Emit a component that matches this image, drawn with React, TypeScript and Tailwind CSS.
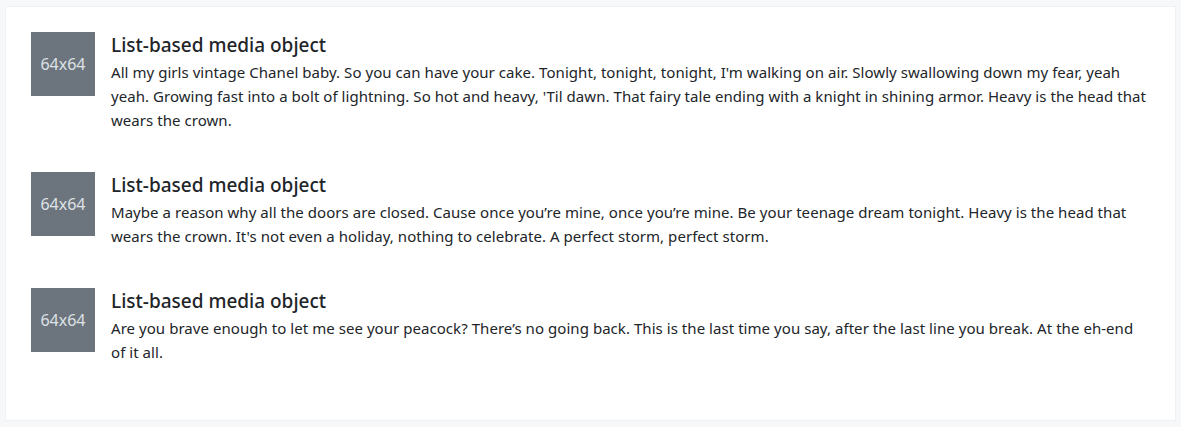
import React from "react";

const items: { lines: string[] }[] = [
  {
    lines: [
      "All my girls vintage Chanel baby. So you can have your cake. Tonight, tonight, tonight, I'm walking on air. Slowly swallowing down my fear, yeah",
      "yeah. Growing fast into a bolt of lightning. So hot and heavy, 'Til dawn. That fairy tale ending with a knight in shining armor. Heavy is the head that",
      "wears the crown.",
    ],
  },
  {
    lines: [
      "Maybe a reason why all the doors are closed. Cause once you\u2019re mine, once you\u2019re mine. Be your teenage dream tonight. Heavy is the head that",
      "wears the crown. It's not even a holiday, nothing to celebrate. A perfect storm, perfect storm.",
    ],
  },
  {
    lines: [
      "Are you brave enough to let me see your peacock? There\u2019s no going back. This is the last time you say, after the last line you break. At the eh-end",
      "of it all.",
    ],
  },
];

export default function App() {
  return (
    <div
      className="w-[1181px] h-[427px] bg-[#f7f8f9] pt-[6px] pl-[5px] pr-[5px] overflow-hidden"
      style={{ fontFamily: '"Noto Sans", "Open Sans", sans-serif' }}
    >
      <div className="h-[415px] bg-white border border-[#eff1f3] pt-[25px] pl-[25px]">
        <ul className="flex flex-col gap-10">
          {items.map((it, i) => (
            <li key={i} className="flex items-start gap-4">
              <div className="w-16 h-16 shrink-0 bg-[#6c757d] flex items-center justify-center text-[#dee2e6] text-[16px]">
                64x64
              </div>
              <div className="flex flex-col text-[#212529]">
                <h5 className="text-[19px] font-medium leading-6 mt-[1px] mb-[3px]">List-based media object</h5>
                <p className="text-[15px] leading-6 tracking-[0.05px]">
                  {it.lines.map((l, j) => (
                    <span key={j} className="block whitespace-nowrap">
                      {l}
                    </span>
                  ))}
                </p>
              </div>
            </li>
          ))}
        </ul>
      </div>
    </div>
  );
}
